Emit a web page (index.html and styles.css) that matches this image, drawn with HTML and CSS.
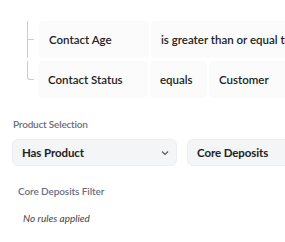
FILE: index.html
```html
<!DOCTYPE html>
<html lang="en">
<head>
    <meta charset="UTF-8">
    <meta name="viewport" content="width=device-width, initial-scale=1.0">
    <title>Segment rules</title>
    <link rel="stylesheet" href="styles.css">
</head>
<body>
    <div class="rules">
        <div class="rule-row">
            <div class="branch branch-mid"></div>
            <div class="cell cell-field">Contact Age</div>
            <div class="cell cell-op">is greater than or equal to</div>
        </div>
        <div class="rule-row">
            <div class="branch branch-last"></div>
            <div class="cell cell-field">Contact Status</div>
            <div class="cell cell-eq">equals</div>
            <div class="cell cell-val">Customer</div>
        </div>
    </div>

    <div class="section">
        <div class="label">Product Selection</div>
        <div class="selects">
            <div class="select select-main">
                <span>Has Product</span>
                <svg class="chevron" width="8" height="6" viewBox="0 0 8 6"><path d="M1 1.5 L4 4.5 L7 1.5" fill="none" stroke="#555" stroke-width="1.1"/></svg>
            </div>
            <div class="select select-second">Core Deposits</div>
        </div>
    </div>

    <div class="filter">
        <div class="filter-title">Core Deposits Filter</div>
        <div class="empty">No rules applied</div>
    </div>
</body>
</html>
```

FILE: styles.css
```css
body {
    margin: 0;
    padding: 0;
    background-color: #ffffff;
    font-family: Lato, "Open Sans", sans-serif;
    color: #222;
    width: 285px;
    overflow: hidden;
}

/* rule rows */
.rules {
    padding: 21px 0 0 27px;
    display: flex;
    flex-direction: column;
    gap: 3px;
}
.rule-row {
    display: flex;
    align-items: stretch;
    height: 37px;
    gap: 2px;
    white-space: nowrap;
}
.branch {
    width: 9px;
    flex: none;
    position: relative;
}
.branch-mid {
    border-left: 1px solid #c9ccd2;
}
.branch-mid::after {
    content: "";
    position: absolute;
    left: 0;
    top: 18px;
    width: 6px;
    border-top: 1px solid #c9ccd2;
}
.branch-last::before {
    content: "";
    position: absolute;
    left: 0;
    top: 0;
    width: 6px;
    height: 18px;
    border-left: 1px solid #c9ccd2;
    border-bottom: 1px solid #c9ccd2;
    border-bottom-left-radius: 3px;
}
.cell {
    background: #fbfbfc;
    border-radius: 4px;
    display: flex;
    align-items: center;
    padding: 0 10px;
    font-size: 11.5px;
    font-weight: 600;
    flex: none;
}
.cell-field {
    width: 90px;
}
.cell-eq {
    width: 37px;
}
.cell-val {
    width: 100px;
}

/* product selection */
.section {
    padding: 20px 12px 0 12px;
}
.label {
    font-size: 10px;
    letter-spacing: -0.2px;
    font-weight: 600;
    color: #6b6f78;
    margin-left: 1px;
}
.selects {
    display: flex;
    gap: 10px;
    margin-top: 9px;
}
.select {
    height: 25px;
    background: #f4f5f7;
    border: 1px solid #eceef1;
    border-radius: 6px;
    display: flex;
    align-items: center;
    padding: 0 7px 0 9px;
    font-size: 11.5px;
    letter-spacing: -0.1px;
    font-weight: 700;
    white-space: nowrap;
    flex: none;
}
.select-main {
    width: 147px;
    justify-content: space-between;
}
.select-second {
    width: 120px;
}

.filter {
    padding: 19px 0 0 18px;
}
.filter-title {
    font-size: 10px;
    letter-spacing: -0.1px;
    font-weight: 600;
    color: #6b6f85;
}
.empty {
    margin: 15px 0 0 5px;
    font-size: 10px;
    font-style: italic;
    color: #444;
}
```
